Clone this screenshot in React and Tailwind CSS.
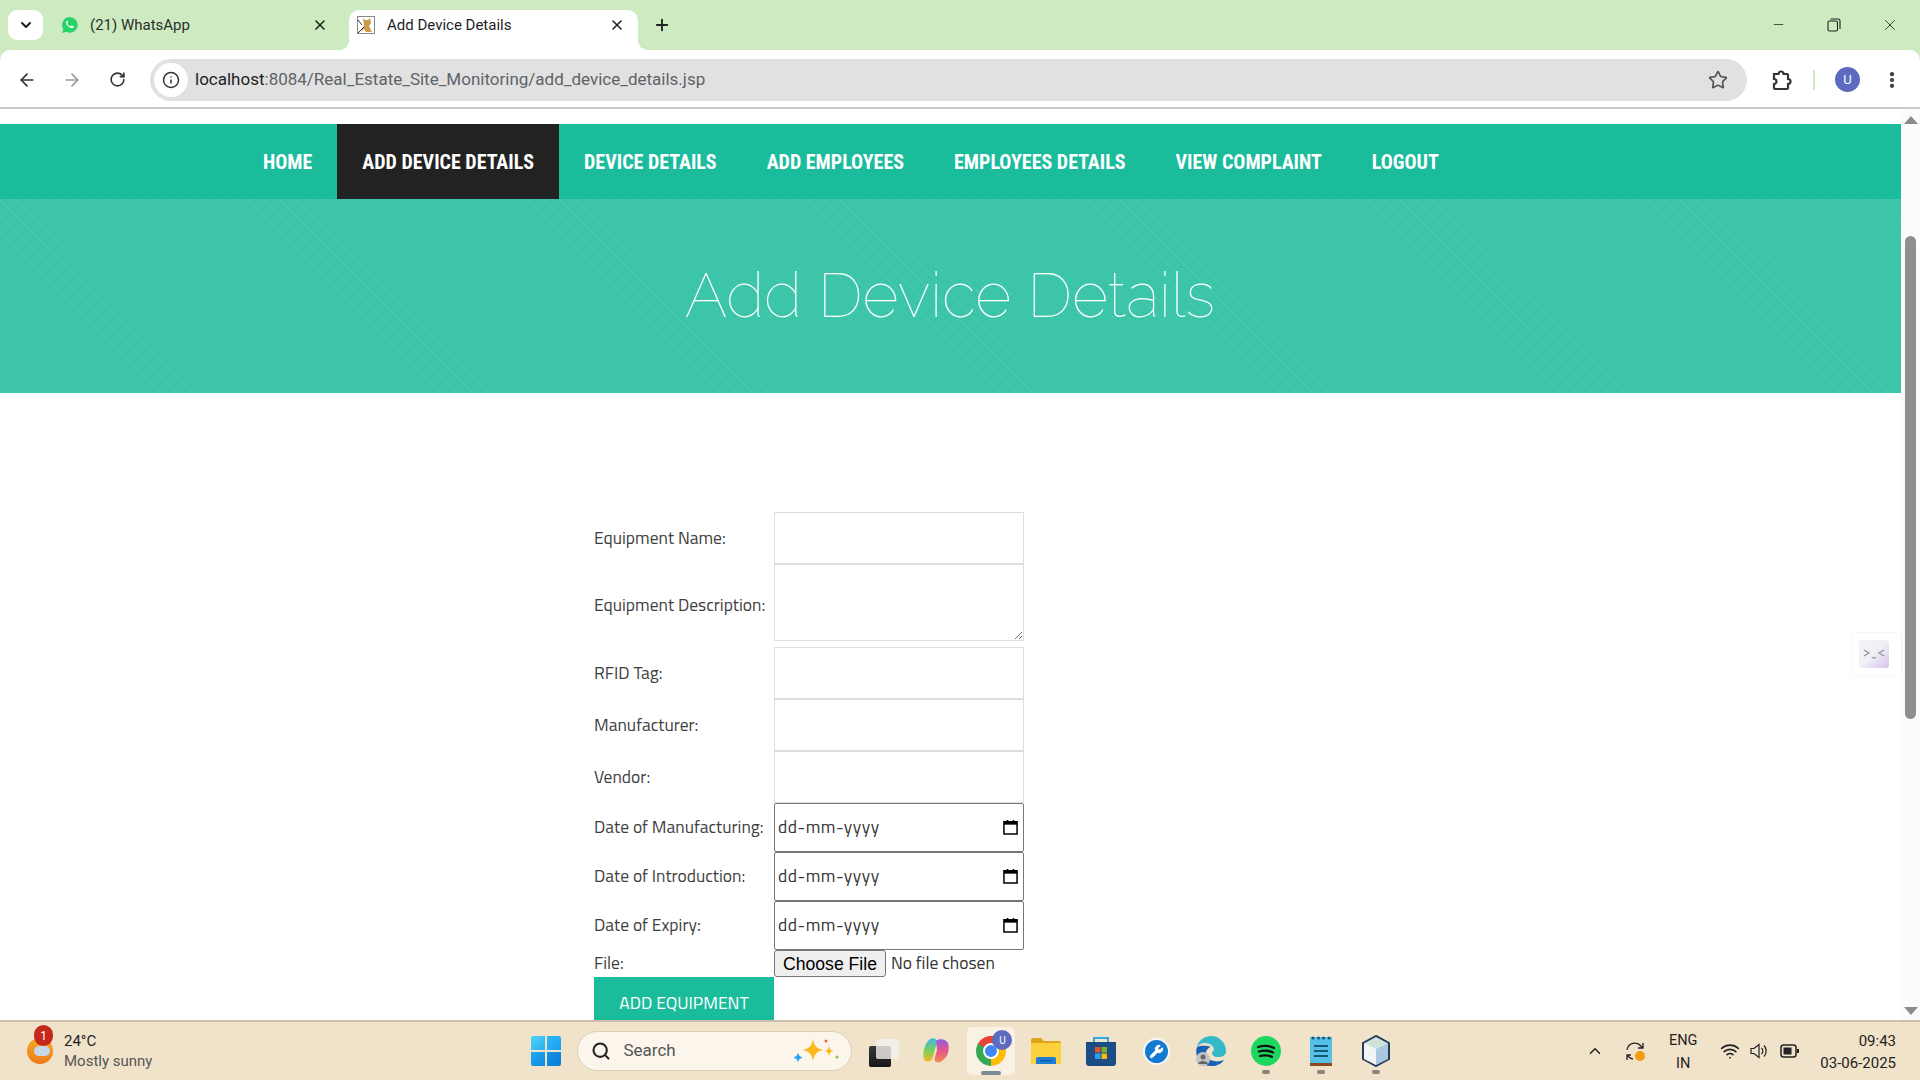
import { ArrowLeft, ArrowRight, RotateCw, Star, Info, Plus, X, ChevronDown, ChevronUp, Minus, Search, MoreVertical, Wifi, Wrench } from 'lucide-react'

const navItems = ['HOME', 'ADD DEVICE DETAILS', 'DEVICE DETAILS', 'ADD EMPLOYEES', 'EMPLOYEES DETAILS', 'VIEW COMPLAINT', 'LOGOUT']

const body = "font-['Titillium_Web','Noto_Sans',sans-serif]"

function WhatsappIcon(){
  return (
    <svg width="18" height="18" viewBox="0 0 24 24">
      <path d="M12 1.500a10.400 10.400 0 0 0-9 15.700L1.500 22.500l5.500-1.400A10.400 10.400 0 1 0 12 1.500z" fill="#25d366"/>
      <path d="M8.300 6.800c-.5 0-1.300.6-1.400 2-.1 1.700 1 3.500 2.600 5 1.700 1.600 3.700 2.700 5.400 2.500 1.300-.2 2.200-1.100 2.200-2 0-.4-.1-.6-.4-.7l-2.200-1c-.3-.1-.5-.1-.7.2l-.8 1c-.2.200-.4.200-.7.100-1.500-.7-2.800-1.900-3.600-3.400-.1-.3-.1-.5.1-.6l.6-.8c.2-.2.2-.4.1-.7l-.9-2c-.1-.4-.4-.6-.6-.6z" fill="#fff"/>
    </svg>
  )
}

function TomcatIcon(){
  return (
    <svg width="20" height="20" viewBox="0 0 18 18">
      <rect x="0.500" y="0.500" width="17" height="17" fill="#fff" stroke="#888"/>
      <path d="M6 2l2 2h3l2-2 1 5-2 3 3 6H9L7 13l-3 3 3-7z" fill="#c99a4b"/>
      <path d="M1 17L7 11M1 4l4 5" stroke="#333"/>
    </svg>
  )
}

function Tab({active, icon, title, className, gap}){
  return (
    <div className={`relative flex items-center h-[40px] pb-[10px] text-[15px] font-['Roboto',sans-serif] ${className} ${active ? 'bg-white rounded-t-[10px] text-[#1f1f1f]' : 'text-[#2c2f2c]'}`}>
      <span className="w-[18px] flex justify-center">{icon}</span>
      <span className={`flex-1 ${gap}`}>{title}</span>
      <X size={16} strokeWidth={2.400} className="text-[#222]"/>
      {active && <span className="absolute bottom-0 -left-[10px] w-[10px] h-[10px] bg-[radial-gradient(circle_at_0_0,transparent_10px,white_10px)]"/>}
      {active && <span className="absolute bottom-0 -right-[10px] w-[10px] h-[10px] bg-[radial-gradient(circle_at_100%_0,transparent_10px,white_10px)]"/>}
    </div>
  )
}

function TitleBar(){
  return (
    <div className="h-[50px] bg-[#cdeac0] flex items-end pl-[8px] shrink-0">
      <div className="w-[35px] h-[30px] mb-[10px] bg-white rounded-[9px] flex items-center justify-center">
        <ChevronDown size={16} strokeWidth={3} className="text-[#222]"/>
      </div>
      <Tab icon={<WhatsappIcon/>} title="(21) WhatsApp" gap="ml-[11px]" className="ml-[6px] w-[287px] pl-[12px] pr-[8px]"/>
      <Tab active icon={<TomcatIcon/>} title="Add Device Details" gap="ml-[12px]" className="ml-[13px] w-[289px] pl-[8px] pr-[13px]"/>
      <div className="ml-[15px] h-[40px] pb-[10px] flex items-center">
        <Plus size={18} strokeWidth={2.500} className="text-[#222]"/>
      </div>
      <div className="ml-auto h-[50px] flex items-center text-[#222] pb-[1px] pr-[2px]">
        <div className="w-[56px] flex justify-center"><Minus size={15} strokeWidth={1.200}/></div>
        <div className="w-[56px] flex justify-center">
          <svg width="14" height="14" viewBox="0 0 14 14" fill="none" stroke="#222" strokeWidth="1.100">
            <rect x="1" y="3" width="9.500" height="10" rx="1.500"/>
            <path d="M3.500 1h7.500a2 2 0 0 1 2 2v8"/>
          </svg>
        </div>
        <div className="w-[56px] flex justify-center"><X size={18} strokeWidth={1.100}/></div>
      </div>
    </div>
  )
}

function Toolbar(){
  return (
    <div className="h-[59px] bg-[#cdeac0] shrink-0">
      <div className="h-[57px] bg-white rounded-t-[10px] flex items-center pl-[17px] pt-[2px]">
        <ArrowLeft size={20} strokeWidth={2} className="text-[#333]"/>
        <ArrowRight size={20} strokeWidth={2} className="ml-[25px] text-[#9a9a9a]"/>
        <RotateCw size={17} strokeWidth={2.300} className="ml-[27px] text-[#333]"/>
        <div className="ml-[24px] w-[1597px] h-[42px] rounded-full bg-[#e1e1e1] flex items-center pl-[4px]">
          <div className="w-[34px] h-[34px] rounded-full bg-white flex items-center justify-center">
            <Info size={18} strokeWidth={2} className="text-[#333]"/>
          </div>
          <div className="ml-[7px] text-[17px] font-['Roboto',sans-serif] text-[#5f6368]">
            <span className="text-[#1f1f1f]">localhost</span>:8084/Real_Estate_Site_Monitoring/add_device_details.jsp
          </div>
          <Star size={20} strokeWidth={2} className="ml-auto mr-[19px] text-[#555]"/>
        </div>
        <svg className="ml-[23px]" width="22" height="22" viewBox="0 0 22 22" fill="none" stroke="#333" strokeWidth="2.200">
          <path d="M4 5h4.500a2.500 2.500 0 0 1 5 0H17a1 1 0 0 1 1 1v4a2.500 2.500 0 0 1 0 5v4a1 1 0 0 1-1 1H5a1 1 0 0 1-1-1v-4a2.500 2.500 0 0 0 0-5V5z"/>
        </svg>
        <div className="ml-[21px] w-[2px] h-[20px] bg-[#cdeac0]"/>
        <div className="ml-[20px] w-[25px] h-[25px] rounded-full bg-[#5c6bc0] text-white text-[13px] flex items-center justify-center font-['Roboto',sans-serif]">U</div>
        <MoreVertical size={20} strokeWidth={3} className="ml-[22px] text-[#333]"/>
      </div>
      <div className="h-[2px] bg-[#c9c9c9]"/>
    </div>
  )
}

function Field({label, children, height}){
  return (
    <>
      <div className={`flex items-center text-[17.500px] text-[#3f3f3f] ${height}`}>{label}</div>
      <div className={height}>{children}</div>
    </>
  )
}

function CalendarGlyph(){
  return (
    <svg width="15" height="16" viewBox="0 0 16 17" className="ml-auto mr-[1px] -mt-[2px]">
      <path d="M1 3h14v13H1z" fill="none" stroke="#000" strokeWidth="1.600"/>
      <path d="M1 2.500h14V6H1z" fill="#000"/>
      <path d="M4 1h1.600v2H4zM10.400 1H12v2h-1.600z" fill="#000"/>
    </svg>
  )
}

function DateInput(){
  return (
    <div className="h-full border border-[#767676] rounded-[2px] flex items-center pl-[3px] pr-[4px] text-[17.500px] text-[#333]">
      <span className="tracking-[0.5px]">dd-mm-yyyy</span>
      <CalendarGlyph/>
    </div>
  )
}

function Form(){
  const box = 'block w-full h-full border border-[#dedede] bg-white outline-none'
  return (
    <div className={`grid grid-cols-[180px_250px] ml-[594px] ${body}`}>
      <Field label="Equipment Name:" height="h-[52px]"><input className={box}/></Field>
      <Field label="Equipment Description:" height="h-[83px]">
        <textarea className="block w-full h-[77px] border border-[#dedede] bg-white outline-none"/>
      </Field>
      <Field label="RFID Tag:" height="h-[52px]"><input className={box}/></Field>
      <Field label="Manufacturer:" height="h-[52px]"><input className={box}/></Field>
      <Field label="Vendor:" height="h-[52px]"><input className={box}/></Field>
      <Field label="Date of Manufacturing:" height="h-[49px]"><DateInput/></Field>
      <Field label="Date of Introduction:" height="h-[49px]"><DateInput/></Field>
      <Field label="Date of Expiry:" height="h-[49px]"><DateInput/></Field>
      <Field label="File:" height="h-[27px]">
        <div className="flex items-center h-full">
          <button className="w-[112px] h-[27px] border border-[#767676] rounded-[3px] bg-[#efefef] text-[17.600px] text-black font-['Liberation_Sans',sans-serif]">Choose File</button>
          <span className="ml-[5px] text-[17.500px] text-[#333]">No file chosen</span>
        </div>
      </Field>
      <button className="w-[180px] h-[60px] bg-[#1abc9c] text-white text-[17.500px] pb-[7px] text-center">ADD EQUIPMENT</button>
    </div>
  )
}

function Page(){
  return (
    <div className="flex-1 flex min-h-0 bg-white overflow-hidden">
      <div className="flex-1 min-w-0 overflow-hidden">
        <nav className="mt-[15px] h-[75px] bg-[#1abc9c] flex pl-[238px] font-['Roboto_Condensed','Liberation_Sans_Narrow','Roboto',sans-serif]">
          {navItems.map((item, i) => (
            <a key={item} className={`px-[25px] flex items-center text-[20px] font-bold text-white ${i === 1 ? 'bg-[#222222]' : ''}`}>{item}</a>
          ))}
        </nav>
        <header className="h-[194px] flex items-center justify-center bg-[#3cc5a9] bg-[repeating-linear-gradient(45deg,#3bc4a8_0px,#3bc4a8_3px,#42c8ad_4px,#39c3a7_7px,#3ec6aa_9px,#3bc4a8_11px)]">
          <h1 className="text-[62.500px] font-thin text-white font-['Raleway','Lato',sans-serif] -ml-[1px]">Add Device Details</h1>
        </header>
        <div className="pt-[119px]">
          <Form/>
        </div>
      </div>
      <div className="w-[19px] bg-[#fbfbfb] flex flex-col items-center relative">
        <div className="mt-[7px] w-0 h-0 border-x-[7px] border-x-transparent border-b-[8px] border-b-[#8a8a8a]"/>
        <div className="mt-[112px] w-[11px] h-[483px] rounded-full bg-[#8f8f8f]"/>
        <div className="mt-auto mb-[5px] w-0 h-0 border-x-[7px] border-x-transparent border-t-[8px] border-t-[#8a8a8a]"/>
        <div className="absolute right-[19px] top-[524px] w-[48px] h-[42px] bg-white rounded-l-[4px] shadow-[0_0_3px_rgba(0,0,0,0.08)] flex items-center pl-[6px]">
          <div className="w-[30px] h-[28px] rounded-[3px] bg-gradient-to-br from-[#f2f4f8] via-[#f0eff6] to-[#d9c3ee] flex items-center justify-center">
            <svg width="22" height="12" viewBox="0 0 22 12" fill="none" stroke="#8f8f8f" strokeWidth="1.300">
              <path d="M1 2l5 3-5 3M21 2l-5 3 5 3M9 9c1 1.500 3 1.500 4 0"/>
            </svg>
          </div>
        </div>
      </div>
    </div>
  )
}

function Dot(){
  return <span className="absolute -bottom-[8px] left-1/2 -translate-x-1/2 w-[8px] h-[4px] rounded-full bg-[#8a8178]"/>
}

function TaskIcon({children, dot}){
  return <div className="relative w-[30px] h-[30px] flex items-center justify-center">{children}{dot && <Dot/>}</div>
}

function Taskbar(){
  return (
    <div className="h-[60px] shrink-0 border-t-2 border-[#cbc0ae] bg-[#f1e3ca] flex items-center relative font-['Roboto',sans-serif]">
      <div className="ml-[27px] relative w-[30px] h-[30px]">
        <div className="absolute left-0 top-[2px] w-[26px] h-[26px] rounded-full bg-gradient-to-b from-[#f7a823] to-[#ee7b1b]"/>
        <div className="absolute left-[7px] top-[10px] w-[16px] h-[10px] rounded-full bg-[#c7d7ea]"/>
        <div className="absolute left-[7px] -top-[11px] w-[19px] h-[21px] rounded-full bg-[#c5281c] text-white text-[12px] flex items-center justify-center">1</div>
      </div>
      <div className="ml-[7px] leading-[20px] text-[15px] -mt-[1px]">
        <div className="text-[#1f1f1f]">24°C</div>
        <div className="text-[#555]">Mostly sunny</div>
      </div>

      <div className="ml-[379px] grid grid-cols-2 gap-[2px] w-[30px] h-[30px]">
        <span className="bg-gradient-to-br from-[#4fd0f8] to-[#28b2f2] rounded-tl-[2px]"/>
        <span className="bg-gradient-to-br from-[#2dbaf4] to-[#1a9eef] rounded-tr-[2px]"/>
        <span className="bg-gradient-to-br from-[#22a8f0] to-[#0f8ce2] rounded-bl-[2px]"/>
        <span className="bg-gradient-to-br from-[#1393e6] to-[#0a7cd8] rounded-br-[2px]"/>
      </div>
      <div className="ml-[16px] w-[275px] h-[40px] rounded-full bg-[#fbf5ec] border border-[#dccfb8] flex items-center pl-[13px]">
        <Search size={20} strokeWidth={2.500} className="text-[#222]"/>
        <span className="ml-[12px] text-[17px] text-[#555]">Search</span>
        <svg className="ml-auto mr-[8px]" width="50" height="30" viewBox="0 0 50 30">
          <path d="M20 3c1.500 7 3 9 10 11-7 2-8.500 4-10 11-1.500-7-3-9-10-11 7-2 8.500-4 10-11z" fill="#fbb81c"/>
          <path d="M36 10c.6 3 1.300 4 4 5-2.700 1-3.400 2-4 5-.6-3-1.300-4-4-5 2.700-1 3.400-2 4-5z" fill="#fbb81c"/>
          <circle cx="33" cy="5" r="1.500" fill="#ee6a2b"/><circle cx="44" cy="21" r="1.500" fill="#8bc34a"/>
          <path d="M5 17l1.500 3 3 1.500-3 1.500L5 26l-1.500-3-3-1.500 3-1.500z" fill="#27a3ee"/>
        </svg>
      </div>

      <div className="ml-[14px] flex items-center gap-[25px]">
        <TaskIcon>
          <div className="absolute left-[3px] top-[10px] w-[22px] h-[21px] bg-gradient-to-b from-[#3a3a3a] to-[#161616] rounded-[2px]"/>
          <div className="absolute left-[10px] top-[3px] w-[23px] h-[20px] bg-[#f3f1ee]/80 rounded-[2px]"/>
        </TaskIcon>
        <TaskIcon>
          <svg width="32" height="32" viewBox="0 0 30 30">
            <defs>
              <linearGradient id="copA" x1="0" y1="0" x2="0" y2="1"><stop offset="0" stopColor="#3fb6e8"/><stop offset=".55" stopColor="#7ed05a"/><stop offset="1" stopColor="#f5b322"/></linearGradient>
              <linearGradient id="copB" x1="0" y1="0" x2="0" y2="1"><stop offset="0" stopColor="#8f5be0"/><stop offset=".5" stopColor="#e7548b"/><stop offset="1" stopColor="#f7894a"/></linearGradient>
            </defs>
            <path d="M9 3c3-1.500 7-1 7 3L12 21c-1 5-8 6-9 2C1 16 4 7 9 3z" fill="url(#copA)"/>
            <path d="M15 5c3-3 10-2 12 2 2 6 0 14-6 18-4 3-9 1-7-4l2-7z" fill="url(#copB)"/>
          </svg>
        </TaskIcon>
        <div className="relative w-[48px] h-[48px] -mx-[9px] rounded-[5px] bg-[#f8f1e4] flex items-center justify-center">
          <div className="w-[30px] h-[30px] rounded-full bg-[conic-gradient(from_-60deg,#ea4335_0deg_120deg,#fbbc04_120deg_240deg,#34a853_240deg_360deg)] flex items-center justify-center">
            <div className="w-[12px] h-[12px] rounded-full bg-[#4285f4] border-2 border-white box-content"/>
          </div>
          <div className="absolute right-[3px] top-[3px] w-[20px] h-[20px] rounded-full bg-[#5c6bc0] text-white text-[10px] flex items-center justify-center">U</div>
          <div className="absolute bottom-0 w-[20px] h-[4px] rounded-full bg-[#7b8a94]"/>
        </div>
        <TaskIcon>
          <svg width="30" height="26" viewBox="0 0 30 26">
            <path d="M0 2a2 2 0 0 1 2-2h8l3 3h15a2 2 0 0 1 2 2v5H0z" fill="#dea51c"/>
            <path d="M0 5h30v21H0z" fill="#fbd13c"/>
            <path d="M5 26v-5a2 2 0 0 1 2-2h16a2 2 0 0 1 2 2v5z" fill="#1a7fd4"/>
            <rect x="9" y="22" width="12" height="1.500" fill="#0d5ea8"/>
          </svg>
        </TaskIcon>
        <TaskIcon>
          <svg width="30" height="30" viewBox="0 0 30 30">
            <path d="M8 7V2h14v5" fill="none" stroke="#32a8e0" strokeWidth="2"/>
            <path d="M0 6h30v21a3 3 0 0 1-3 3H3a3 3 0 0 1-3-3z" fill="#1c4c86"/>
            <rect x="9" y="11" width="5.500" height="5.500" fill="#e4502c"/><rect x="15.500" y="11" width="5.500" height="5.500" fill="#75b52e"/>
            <rect x="9" y="17.500" width="5.500" height="5.500" fill="#25a5ee"/><rect x="15.500" y="17.500" width="5.500" height="5.500" fill="#fcb90c"/>
          </svg>
        </TaskIcon>
        <TaskIcon>
          <div className="w-[23px] h-[23px] rounded-full bg-[#1479d0] border-2 border-[#f8f8f8] box-content flex items-center justify-center">
            <Wrench size={15} fill="#fff" strokeWidth={1.500} className="text-white"/>
          </div>
        </TaskIcon>
        <TaskIcon>
          <svg width="30" height="30" viewBox="0 0 30 30">
            <path d="M15 0a15 15 0 0 1 15 15c0 4-3 6-8 6-4 0-6-2-6-4 0-1 1-2 2-3 0-4-4-7-9-7-4 0-7 2-8 4C2 5 8 0 15 0z" fill="#35b8c8"/>
            <path d="M1 11c-3 9 3 19 14 19 6 0 10-2 13-6-3 1-7 2-10 1-6-1-9-5-8-9 1-3 3-5 5-5-6-2-12-1-14 0z" fill="#1a62b8"/>
            <circle cx="7" cy="23" r="7" fill="#c4c4c4"/><circle cx="7" cy="21" r="2.500" fill="#666"/><path d="M2 28c1-4 9-4 10 0z" fill="#666"/>
          </svg>
        </TaskIcon>
        <TaskIcon dot>
          <svg width="30" height="30" viewBox="0 0 30 30">
            <circle cx="15" cy="15" r="15" fill="#1ed760"/>
            <path d="M7 11c6-2 11-1.500 16 1M8 15.500c5-1.500 10-1 14 1M9 20c4-1 8-.7 12 .8" fill="none" stroke="#111" strokeWidth="2.300" strokeLinecap="round"/>
          </svg>
        </TaskIcon>
        <TaskIcon dot>
          <svg width="22" height="30" viewBox="0 0 22 30">
            <rect y="1" width="22" height="27" fill="#57bfe6"/>
            <rect y="27" width="22" height="3" fill="#8a4b20"/>
            <circle cx="3" cy="2" r="1.500" fill="#14587a"/><circle cx="8.500" cy="2" r="1.500" fill="#14587a"/><circle cx="13.500" cy="2" r="1.500" fill="#14587a"/><circle cx="19" cy="2" r="1.500" fill="#14587a"/>
            <path d="M4 10h14M4 15h14M4 20h14" stroke="#14587a" strokeWidth="2"/>
          </svg>
        </TaskIcon>
        <TaskIcon dot>
          <svg width="30" height="32" viewBox="0 0 30 32">
            <path d="M15 1l13 7v16l-13 7-13-7V8z" fill="#dfe8ee" stroke="#26395e" strokeWidth="2"/>
            <path d="M3 8l12 6v16L3 24z" fill="#f2f5f8"/><path d="M27 8l-12 6v16l12-6z" fill="#a9c7dd"/>
            <path d="M15 2l11 6-11 6L4 8z" fill="#cfe3d8"/>
          </svg>
        </TaskIcon>
      </div>

      <div className="ml-auto flex items-center text-[#222]">
        <ChevronUp size={18} strokeWidth={2}/>
        <svg className="ml-[21px]" width="21" height="21" viewBox="0 0 21 21" fill="none" stroke="#222" strokeWidth="1.300">
          <path d="M2 9a8 8 0 0 1 14-4l2 2M18 2v5h-5M2 19v-5h4M2 14l2 2a8 8 0 0 0 4 2"/>
          <circle cx="15" cy="15" r="5" fill="#f39c12" stroke="none"/>
        </svg>
        <div className="ml-[21px] mt-[2px] w-[32px] text-center text-[14.500px] leading-[23px]"><div>ENG</div><div>IN</div></div>
        <Wifi size={20} strokeWidth={2} className="ml-[21px]"/>
        <svg className="ml-[9px]" width="20" height="20" viewBox="0 0 20 20" fill="none" stroke="#222" strokeWidth="1.200">
          <path d="M2 7.500v5h3l5 4v-13l-5 4zM12.500 7a4 4 0 0 1 0 6M15 4.500a8 8 0 0 1 0 11"/>
        </svg>
        <svg className="ml-[11px]" width="20" height="14" viewBox="0 0 20 14">
          <rect x="1" y="1" width="15" height="12" rx="2.500" fill="none" stroke="#222" strokeWidth="1.500"/>
          <rect x="3.500" y="3.500" width="8" height="7" fill="#222"/><rect x="17" y="5" width="2" height="4" fill="#222"/>
        </svg>
        <div className="ml-[20px] mr-[24px] mt-[1px] text-right text-[15px] leading-[22px]"><div>09:43</div><div>03-06-2025</div></div>
      </div>
    </div>
  )
}

export default function App(){
  return (
    <div className="w-[1920px] h-[1080px] flex flex-col overflow-hidden">
      <TitleBar/>
      <Toolbar/>
      <Page/>
      <Taskbar/>
    </div>
  )
}
